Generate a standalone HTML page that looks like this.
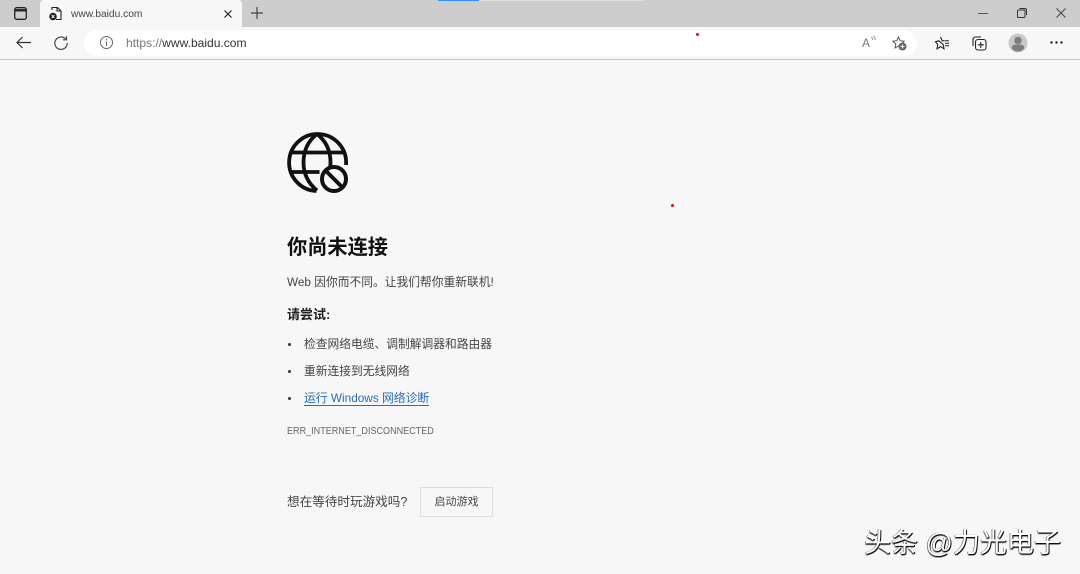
<!DOCTYPE html>
<html lang="zh">
<head>
<meta charset="utf-8">
<title>www.baidu.com</title>
<style>
html,body{margin:0;padding:0}
body{width:1080px;height:574px;overflow:hidden;background:#f7f7f7;position:relative;font-family:"Liberation Sans","Noto Sans CJK SC",sans-serif;color:#333}
.t{position:absolute;white-space:nowrap;line-height:20px}
.b{position:absolute}
svg{position:absolute;overflow:visible}
</style>
</head>
<body>
<div class="b" style="left:0;top:0;width:1080px;height:27px;background:#cdcdcd"></div>
<div class="b" style="left:438px;top:0;width:41px;height:1px;background:#3f8fe0"></div>
<div class="b" style="left:479px;top:0;width:164px;height:1px;background:#e2e2e2"></div>
<div class="b" style="left:40px;top:0;width:202px;height:27px;background:#f7f7f7;border-radius:4px 4px 0 0"></div>
<div class="b" style="left:0;top:27px;width:1080px;height:32px;background:#f7f7f7"></div>
<div class="b" style="left:0;top:59px;width:1080px;height:1px;background:#c6c6c6"></div>
<div class="b" style="left:84px;top:30px;width:833px;height:26px;background:#fff;border-radius:13px"></div>

<svg style="left:14px;top:7px" width="13" height="13" viewBox="0 0 13 13" fill="none" stroke="#222" stroke-width="1.300"><rect x=".7" y=".7" width="11.600" height="11.600" rx="2"/><path d="M.7 3.300h11.600" stroke-width="2.400"/></svg>
<svg style="left:49px;top:6px" width="13" height="15" viewBox="0 0 13 15" fill="none"><path d="M3 4V1.500h5.500L12 5v8.500H7" stroke="#222" stroke-width="1.100"/><path d="M8 1.500V5h4" stroke="#222" stroke-width="1.100"/><circle cx="4" cy="10.500" r="3.800" fill="#222"/><path d="M2.600 9.100l2.800 2.800M5.400 9.100l-2.800 2.800" stroke="#fff" stroke-width=".9"/></svg>
<div class="t" style="left:71px;top:4px;font-size:10.200px;line-height:21px;color:#444">www.baidu.com</div>
<svg style="left:224px;top:10px" width="8" height="8" viewBox="0 0 8 8" stroke="#222" stroke-width="1.200"><path d="M.5.500l7 7M7.500.500l-7 7"/></svg>
<svg style="left:251px;top:7px" width="12" height="12" viewBox="0 0 12 12" stroke="#444" stroke-width="1.200"><path d="M6 0v12M0 6h12"/></svg>

<svg style="left:978px;top:13px" width="10" height="1" viewBox="0 0 10 1"><path d="M0 .5h10" stroke="#555"/></svg>
<svg style="left:1017px;top:8px" width="10" height="10" viewBox="0 0 10 10" fill="none" stroke="#333"><rect x=".5" y="2" width="7.500" height="7.500" rx="1"/><path d="M2.500 .5h5.500a1.500 1.500 0 0 1 1.500 1.500v5"/></svg>
<svg style="left:1056px;top:8px" width="10" height="10" viewBox="0 0 10 10" stroke="#444"><path d="M.5.500l9 9M9.500.500l-9 9"/></svg>

<svg style="left:16px;top:36px" width="15" height="13" viewBox="0 0 15 13" fill="none" stroke="#333" stroke-width="1.200"><path d="M15 6.500H1M6.500 1L1 6.500 6.500 12"/></svg>
<svg style="left:54px;top:36px" width="14" height="14" viewBox="0 0 14 14" fill="none" stroke="#444" stroke-width="1.200"><path d="M11.800 3.300A6.200 6.200 0 1 0 13.200 7"/><path d="M12.500 .3v3.500H9"/></svg>
<svg style="left:100px;top:36px" width="13" height="13" viewBox="0 0 13 13" fill="none" stroke="#666"><circle cx="6.500" cy="6.500" r="6"/><path d="M6.500 5.500v4.500M6.500 3v1.200"/></svg>
<div class="t" style="left:126px;top:33px;font-size:12.050px;color:#777">https://<span style="color:#333">www.baidu.com</span></div>
<div class="b" style="left:696px;top:33px;width:3px;height:3px;border-radius:50%;background:#c8161d"></div>

<div class="t" style="left:862px;top:33px;font-size:12px;color:#777">A</div>
<svg style="left:870px;top:36px" width="6" height="6" viewBox="0 0 6 6" fill="none" stroke="#888" stroke-width=".8"><path d="M1 1q2 1 1.500 3M3.300 0q2.500 1.500 1.700 4"/></svg>
<svg style="left:892px;top:36px" width="15" height="15" viewBox="0 0 15 15" fill="none"><path d="M6.500 1l1.700 3.700 4 .5-3 2.700.8 4-3.500-2-3.500 2 .8-4-3-2.700 4-.5z" stroke="#555" stroke-width="1"/><circle cx="10.500" cy="10.500" r="4" fill="#666"/><path d="M8.500 10.500h4M10.500 8.500v4" stroke="#fff" stroke-width=".9"/></svg>
<svg style="left:935px;top:36px" width="14" height="14" viewBox="0 0 14 14" fill="none" stroke="#222" stroke-width="1.100"><path d="M5.500 1L7.200 4.800h2M8.200 8.500l.8 4.300-3.500-2.200L2 12.800l.8-4.300L.5 5.800l3.300-1z"/><path d="M9.500 4.800H14M10 7.300h4M10 9.800h4" stroke-width="1"/></svg>
<svg style="left:972px;top:36px" width="15" height="15" viewBox="0 0 15 15" fill="none" stroke="#222" stroke-width="1.100"><path d="M1 10V3.500A2.500 2.500 0 0 1 3.500 1H9"/><rect x="3.500" y="3.500" width="10.500" height="10.500" rx="2.500"/><path d="M8.750 6v6M5.800 8.800h6"/></svg>
<svg style="left:1008px;top:33px" width="20" height="20" viewBox="0 0 20 20"><circle cx="10" cy="10" r="9.500" fill="#c9c9c9"/><circle cx="10" cy="7.500" r="3.800" fill="#7d7d7d"/><path d="M3.500 15q1-3.500 3.500-3.500h6q2.500 0 3.500 3.500-2.500 3.500-6.500 3.500t-6.500-3.500z" fill="#7d7d7d"/></svg>
<svg style="left:1050px;top:41px" width="13" height="3" viewBox="0 0 13 3" fill="#222"><circle cx="1.500" cy="1.500" r="1.200"/><circle cx="6.500" cy="1.500" r="1.200"/><circle cx="11.500" cy="1.500" r="1.200"/></svg>

<svg style="left:287px;top:132px" width="62" height="62" viewBox="0 0 62 62" fill="none" stroke="#111" stroke-width="3.800">
<path d="M29.500 59A28.500 28.500 0 1 1 59 33"/>
<path d="M30 2C21 9 16.500 19 16.500 30.500S21 51 30 58.500"/>
<path d="M30 2c9 7 13.500 17 13.500 28.500 0 1.800-.1 3-.3 5"/>
<path d="M4 20.500h52M2.500 40h30"/>
<circle cx="47" cy="47" r="12" stroke-width="4"/>
<path d="M39 39l16 16" stroke-width="4"/>
</svg>

<div class="t" style="left:287px;top:235px;font-size:20.200px;line-height:26px;font-weight:700;color:#111">你尚未连接</div>
<div class="t" style="left:287px;top:273px;font-size:11.750px;color:#444">Web 因你而不同。让我们帮你重新联机!</div>
<div class="t" style="left:287px;top:305px;font-size:13px;font-weight:700;color:#222">请尝试:</div>
<div class="b" style="left:288px;top:343px;width:3px;height:3px;border-radius:50%;background:#333"></div>
<div class="t" style="left:304px;top:335px;font-size:11.750px;color:#444">检查网络电缆、调制解调器和路由器</div>
<div class="b" style="left:288px;top:370px;width:3px;height:3px;border-radius:50%;background:#333"></div>
<div class="t" style="left:304px;top:362px;font-size:11.750px;color:#444">重新连接到无线网络</div>
<div class="b" style="left:288px;top:397px;width:3px;height:3px;border-radius:50%;background:#333"></div>
<div class="t" style="left:304px;top:389px;font-size:11.800px;color:#2a6db0;border-bottom:1px solid #2a6db0;line-height:18px;height:16px">运行 Windows 网络诊断</div>
<div class="t" style="left:287px;top:422px;font-size:10px;color:#666;transform:scaleX(.905);transform-origin:0 0">ERR_INTERNET_DISCONNECTED</div>
<div class="t" style="left:287px;top:492px;font-size:12.600px;color:#444">想在等待时玩游戏吗?</div>
<div class="b" style="left:420px;top:487px;width:71px;height:28px;border:1px solid #ddd;background:#f7f7f7;text-align:center;font-size:11px;line-height:28px;color:#444">启动游戏</div>

<div class="b" style="left:671px;top:204px;width:3px;height:3px;border-radius:50%;background:#c8161d"></div>
<div class="t" style="left:864px;top:526px;font-size:27px;line-height:34px;color:#fff;text-shadow:1px 1px 0 #111,-.5px 0 0 #333,0 1.500px 1px #333">头条 @力光电子</div>
</body>
</html>
